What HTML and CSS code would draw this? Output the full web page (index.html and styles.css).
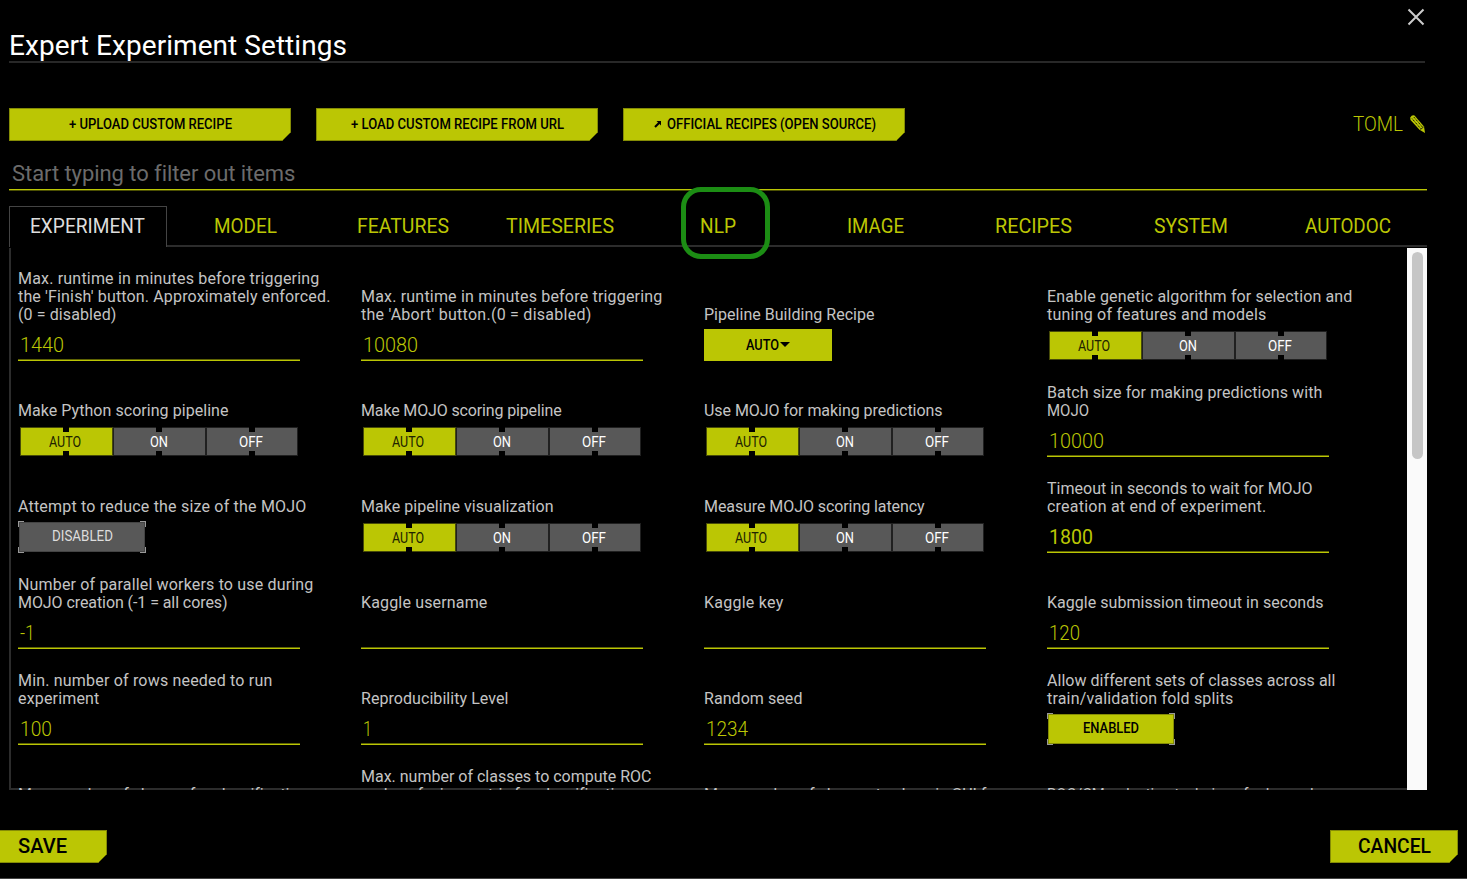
FILE: index.html
```html
<!DOCTYPE html>
<html lang="en">
<head>
<meta charset="utf-8">
<title>Expert Experiment Settings</title>
<link rel="stylesheet" href="styles.css">
</head>
<body>
<main class="dialog">
  <header class="head">
    <h1 class="title"><span data-w="337.500">Expert Experiment Settings</span></h1>
    <svg class="close" viewBox="0 0 18 18"><path d="M1.5 1.5l15 15M16.500 1.500l-15 15"/></svg>
  </header>

  <div class="toolbar">
    <div class="cut"><span data-w="162">+ UPLOAD CUSTOM RECIPE</span></div>
    <div class="cut"><span data-w="212">+ LOAD CUSTOM RECIPE FROM URL</span></div>
    <div class="cut"><svg class="arrow" viewBox="0 0 8 8"><path d="M1 7l4.500-4.500" stroke-width="2.200"/><path d="M2.500 1H7v4.500z" class="solid"/></svg><span data-w="208">OFFICIAL RECIPES (OPEN SOURCE)</span></div>
    <div class="toml"><span data-w="49">TOML</span>
      <svg class="pencil" viewBox="0 0 18 20"><path class="wood" d="M1.200 3.500Q3 .5 5.500 1.500L15 12.500 16 19 10.500 15.800 1.500 6z"/><path class="lines" d="M3 4.500l9 10.500M4.800 3l9 10.500"/><path class="tip" d="M11.500 15.500l3-2.500"/></svg>
    </div>
  </div>

  <div class="filter"><span data-w="282">Start typing to filter out items</span></div>

  <nav class="tabs">
    <div class="tab active"><span data-w="114">EXPERIMENT</span></div>
    <div class="tab"><span data-w="62">MODEL</span></div>
    <div class="tab"><span data-w="91">FEATURES</span></div>
    <div class="tab"><span data-w="107">TIMESERIES</span></div>
    <div class="tab"><span data-w="35">NLP</span><i class="ring"></i></div>
    <div class="tab"><span data-w="56">IMAGE</span></div>
    <div class="tab"><span data-w="76">RECIPES</span></div>
    <div class="tab"><span data-w="73">SYSTEM</span></div>
    <div class="tab"><span data-w="85">AUTODOC</span></div>
  </nav>

  <section class="panel">
    <div class="grid">
      <div class="item"><label><span data-w="301">Max. runtime in minutes before triggering</span><span data-w="312">the 'Finish' button. Approximately enforced.</span><span data-w="98">(0 = disabled)</span></label><div class="input"><span data-w="43">1440</span></div></div>
      <div class="item"><label><span data-w="301">Max. runtime in minutes before triggering</span><span data-w="230">the 'Abort' button.(0 = disabled)</span></label><div class="input"><span data-w="54">10080</span></div></div>
      <div class="item"><label><span data-w="170">Pipeline Building Recipe</span></label><div class="select"><span data-w="32">AUTO</span><i class="caret"></i></div></div>
      <div class="item"><label><span data-w="305">Enable genetic algorithm for selection and</span><span data-w="219">tuning of features and models</span></label><div class="toggle"><b class="on"><span data-w="31">AUTO</span></b><b><span data-w="17">ON</span></b><b><span data-w="23">OFF</span></b></div></div>

      <div class="item"><label><span data-w="210">Make Python scoring pipeline</span></label><div class="toggle"><b class="on"><span data-w="31">AUTO</span></b><b><span data-w="17">ON</span></b><b><span data-w="23">OFF</span></b></div></div>
      <div class="item"><label><span data-w="200">Make MOJO scoring pipeline</span></label><div class="toggle"><b class="on"><span data-w="31">AUTO</span></b><b><span data-w="17">ON</span></b><b><span data-w="23">OFF</span></b></div></div>
      <div class="item"><label><span data-w="238">Use MOJO for making predictions</span></label><div class="toggle"><b class="on"><span data-w="31">AUTO</span></b><b><span data-w="17">ON</span></b><b><span data-w="23">OFF</span></b></div></div>
      <div class="item"><label><span data-w="275">Batch size for making predictions with</span><span data-w="41">MOJO</span></label><div class="input"><span data-w="54">10000</span></div></div>

      <div class="item"><label><span data-w="288">Attempt to reduce the size of the MOJO</span></label><div class="state off"><b><span data-w="60">DISABLED</span></b></div></div>
      <div class="item"><label><span data-w="192">Make pipeline visualization</span></label><div class="toggle"><b class="on"><span data-w="31">AUTO</span></b><b><span data-w="17">ON</span></b><b><span data-w="23">OFF</span></b></div></div>
      <div class="item"><label><span data-w="220">Measure MOJO scoring latency</span></label><div class="toggle"><b class="on"><span data-w="31">AUTO</span></b><b><span data-w="17">ON</span></b><b><span data-w="23">OFF</span></b></div></div>
      <div class="item"><label><span data-w="265">Timeout in seconds to wait for MOJO</span><span data-w="219">creation at end of experiment.</span></label><div class="input strong"><span data-w="43">1800</span></div></div>

      <div class="item"><label><span data-w="295">Number of parallel workers to use during</span><span data-w="209">MOJO creation (-1 = all cores)</span></label><div class="input"><span data-w="14">-1</span></div></div>
      <div class="item"><label><span data-w="126">Kaggle username</span></label><div class="input"></div></div>
      <div class="item"><label><span data-w="79">Kaggle key</span></label><div class="input"></div></div>
      <div class="item"><label><span data-w="276">Kaggle submission timeout in seconds</span></label><div class="input"><span data-w="30">120</span></div></div>

      <div class="item"><label><span data-w="254">Min. number of rows needed to run</span><span data-w="81">experiment</span></label><div class="input"><span data-w="31">100</span></div></div>
      <div class="item"><label><span data-w="147">Reproducibility Level</span></label><div class="input"><span data-w="8">1</span></div></div>
      <div class="item"><label><span data-w="98">Random seed</span></label><div class="input"><span data-w="41">1234</span></div></div>
      <div class="item"><label><span data-w="288">Allow different sets of classes across all</span><span data-w="186">train/validation fold splits</span></label><div class="state"><b><span data-w="55">ENABLED</span></b></div></div>

      <div class="item"><label><span data-w="288">Max. number of classes for classification</span></label><div class="input"></div></div>
      <div class="item"><label><span data-w="290">Max. number of classes to compute ROC</span><span data-w="270">and confusion matrix for classification</span></label><div class="input"></div></div>
      <div class="item"><label><span data-w="296">Max. number of classes to show in GUI for</span></label><div class="input"></div></div>
      <div class="item"><label><span data-w="289">ROC/CM reduction technique for large class</span></label><div class="input"></div></div>
    </div>
    <div class="scroll"><i class="thumb"></i></div>
  </section>

  <footer class="foot">
    <div class="cut save"><span data-w="48">SAVE</span></div>
    <div class="cut cancel"><span data-w="72">CANCEL</span></div>
  </footer>
</main>
<script src="fit.js"></script>
</body>
</html>
```
FILE: styles.css
```css
* { box-sizing: border-box; }
body {
  margin: 0;
  background: #000;
  color: #c4c4c4;
  font-family: Roboto, "Liberation Sans", sans-serif;
  overflow: hidden;
}
span { display: inline-block; white-space: nowrap; }
.dialog {
  width: 1467px;
  height: 879px;
  display: flex;
  flex-direction: column;
  border-bottom: 1px solid #444;
}
.head {
  height: 63px;
  margin: 0 42px 0 9px;
  display: flex;
  justify-content: space-between;
  border-bottom: 2px solid #282828;
}
.title {
  margin: 29px 0 0;
  font-size: 28px;
  line-height: 33px;
  font-weight: 400;
  color: #fff;
}
.close {
  width: 18px;
  height: 18px;
  margin-top: 8px;
  fill: none;
  stroke: #ccc;
  stroke-width: 2;
}
.toolbar {
  display: flex;
  gap: 25px;
  margin: 45px 40px 0 9px;
}
.cut {
  width: 282px;
  height: 33px;
  padding: 0 0 2px 1px;
  display: flex;
  align-items: center;
  justify-content: center;
  background: #bbc604;
  border: 1px solid #858c05;
  clip-path: polygon(0 0, 100% 0, 100% calc(100% - 9px), calc(100% - 9px) 100%, 0 100%);
  color: #000;
  font-size: 14px;
  font-weight: 500;
}
.arrow {
  width: 8px;
  height: 8px;
  margin-right: 5px;
  stroke: #000;
}
.solid { stroke: none; }
.toml {
  margin-left: auto;
  padding-bottom: 2px;
  display: flex;
  align-items: center;
  font-size: 20.500px;
  font-weight: 300;
  color: #bbc604;
}
.pencil {
  width: 18px;
  height: 20px;
  margin-left: 6px;
  fill: #bbc604;
}
.pencil .lines { stroke: #000; stroke-width: .9; stroke-dasharray: 1.300 .7; fill: none; }
.pencil .tip { stroke: #000; stroke-width: .8; }
.filter {
  height: 49px;
  margin: 0 40px 0 9px;
  padding: 20px 0 0 3px;
  border-bottom: 1px solid #bbc604;
  box-shadow: 0 1px #4c5002;
  font-size: 22px;
  line-height: 26px;
  color: #6b6b6b;
}
.tabs {
  display: grid;
  grid-template-columns: repeat(9, 1fr);
  grid-template-rows: 41px;
  height: 41px;
  margin: 16px 40px 0 9px;
  font-size: 20.500px;
  line-height: 41px;
  color: #bbc604;
}
.tab {
  position: relative;
  text-align: center;
  border-bottom: 2px solid #2c2c2c;
}
.tab.active {
  color: #ddd;
  border: 1px solid #444;
  border-bottom: 0;
  line-height: 39px;
}
.ring {
  position: absolute;
  left: 42px;
  top: -19px;
  width: 89px;
  height: 72px;
  border: 5px solid #1c8d14;
  border-radius: 20px;
}
.panel {
  display: flex;
  height: 542px;
  flex: none;
  margin: 1px 40px 0 9px;
}
.grid {
  flex: 1;
  display: grid;
  grid-template-columns: repeat(4, 343px);
  grid-auto-rows: 96px;
  align-content: start;
  padding: 17px 0 0 7px;
  border-left: 2px solid #2c2c2c;
  box-shadow: inset 0 -2px #2c2c2c;
  overflow: hidden;
}
.item {
  display: flex;
  flex-direction: column;
  justify-content: flex-end;
}
label {
  display: flex;
  flex-direction: column;
  align-items: flex-start;
  font-size: 16px;
  line-height: 18px;
}
.input, .toggle, .select, .state { flex: none; }
.input {
  width: 282px;
  height: 37px;
  padding-left: 2px;
  border-bottom: 1px solid #bbc604;
  box-shadow: inset 0 -1px #5e6302;
  font-size: 21px;
  line-height: 43px;
  font-weight: 300;
  color: #bbc604;
}
.strong { font-weight: 400; }
.toggle {
  display: grid;
  grid-template-columns: 93px 93px 92px;
  height: 29px;
  margin: 7px 0 1px 2px;
}
.toggle b {
  position: relative;
  display: flex;
  align-items: center;
  justify-content: center;
  padding-right: 2px;
  border: 1px solid #202020;
  background: #585858;
  color: #fff;
  font-size: 14px;
  font-weight: 400;
}
.toggle .on {
  background: #bbc604;
  border-color: #474b08;
  color: #202200;
}
.toggle b::before, .toggle b::after {
  content: "";
  position: absolute;
  left: 42px;
  width: 6px;
  height: 5px;
  background: #000;
}
.toggle b::before { top: -1px; }
.toggle b::after { bottom: -1px; }
.select {
  width: 128px;
  height: 32px;
  margin: 5px 0 0;
  padding-bottom: 1px;
  display: flex;
  align-items: center;
  justify-content: center;
  background: #bbc604;
  color: #000;
  font-size: 14px;
  font-weight: 500;
}
.caret {
  border: 5px solid transparent;
  border-top: 5px solid #000;
  border-bottom: 0;
}
.state {
  width: 128px;
  height: 32px;
  margin: 5px 0 0;
  padding: 1px;
  display: grid;
  background:
    linear-gradient(#999 0 0) 0 0 / 6px 6px,
    linear-gradient(#999 0 0) 100% 0 / 6px 6px,
    linear-gradient(#999 0 0) 0 100% / 6px 6px,
    linear-gradient(#999 0 0) 100% 100% / 6px 6px;
  background-repeat: no-repeat;
}
.state b {
  display: grid;
  place-items: center;
  padding-bottom: 2px;
  background: #bbc604;
  border: 1px solid #858c05;
  color: #000;
  font-size: 14px;
  font-weight: 500;
}
.state.off b {
  background: #585858;
  border-color: #444;
  color: #ddd;
  font-weight: 400;
}
.scroll {
  width: 20px;
  padding: 4px 4px 0 5px;
  background: #fafafa;
}
.thumb {
  display: block;
  height: 207px;
  border-radius: 6px;
  background: #c6c6c6;
}
.foot {
  display: flex;
  justify-content: space-between;
  margin: 40px 9px 0 0;
}
.foot .cut { font-size: 21px; }
.save { width: 107px; justify-content: flex-start; padding-left: 18px; border-left: 0; }
.cancel { width: 128px; }
```
FILE: fit.js
```js
// Fits each text to the width given in data-w: wide texts are condensed,
// narrow ones are tracked out. A negative margin keeps the layout width equal.
document.querySelectorAll('[data-w]').forEach(function (el) {
  var target = Number(el.dataset.w);
  var range = document.createRange();
  range.selectNodeContents(el);
  var natural = range.getBoundingClientRect().width;
  var step = (target + 0.5 - natural) / el.textContent.length;
  if (step < -0.15) {
    el.style.transformOrigin = '0 50%';
    el.style.transform = 'scaleX(' + ((target + 1) / natural).toFixed(4) + ')';
    el.style.marginRight = (target + 1 - natural).toFixed(2) + 'px';
  } else {
    el.style.letterSpacing = step.toFixed(3) + 'px';
  }
});
```
